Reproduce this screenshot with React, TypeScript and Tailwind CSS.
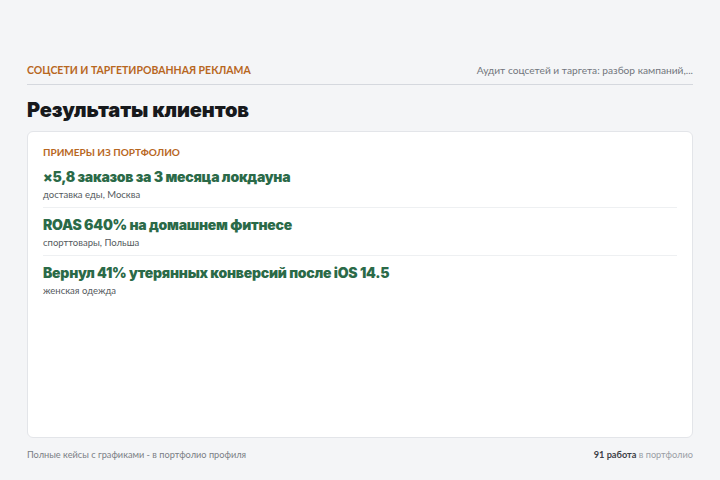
import React from "react";

const cases = [
  { title: "×5,8 заказов за 3 месяца локдауна", meta: "доставка еды, Москва" },
  { title: "ROAS 640% на домашнем фитнесе", meta: "спорттовары, Польша" },
  { title: "Вернул 41% утерянных конверсий после iOS 14.5", meta: "женская одежда" },
];

export default function App() {
  return (
    <div className="flex h-[480px] w-[720px] flex-col bg-[#f4f5f7] px-[27px] pt-[62px] pb-[18px] font-['Lato','Noto_Sans',sans-serif]">
      <div className="flex items-center justify-between border-b border-[#d5d8de] pb-[6px]">
        <span className="text-[10.5px] leading-[16px] font-bold uppercase text-[#b8671f]">Соцсети и таргетированная реклама</span>
        <span className="text-[10.2px] leading-[16px] text-[#72767d]">Аудит соцсетей и таргета: разбор кампаний,...</span>
      </div>

      <h1 className="mt-[11px] font-['Inter',sans-serif] text-[20px] leading-[28px] font-black tracking-[-0.1px] text-[#17191c]">
        Результаты клиентов
      </h1>

      <div className="mt-[7px] flex-1 rounded-md border border-[#e3e5e9] bg-white px-[15px] pt-[13px]">
        <div className="text-[10px] leading-[14px] font-bold uppercase text-[#b8671f]">Примеры из портфолио</div>
        <div className="mt-[8px] flex flex-col">
          {cases.map((c, i) => (
            <div key={i} className={i === 0 ? "" : "border-t border-[#eef0f2] pt-[7px]"}>
              <div className="font-['Inter',sans-serif] text-[14px] leading-[20px] font-black tracking-[-0.25px] text-[#2b6a48]">
                {c.title}
              </div>
              <div className="mt-[1px] pb-[5px] text-[9.5px] leading-[14px] text-[#555a60]">{c.meta}</div>
            </div>
          ))}
        </div>
      </div>

      <div className="mt-[10px] flex items-center justify-between text-[9.2px] leading-[14px]">
        <span className="text-[#7a7e85]">Полные кейсы с графиками - в портфолио профиля</span>
        <span className="text-[#9a9ea5]">
          <b className="font-bold text-[#3c4046]">91 работа</b> в портфолио
        </span>
      </div>
    </div>
  );
}
